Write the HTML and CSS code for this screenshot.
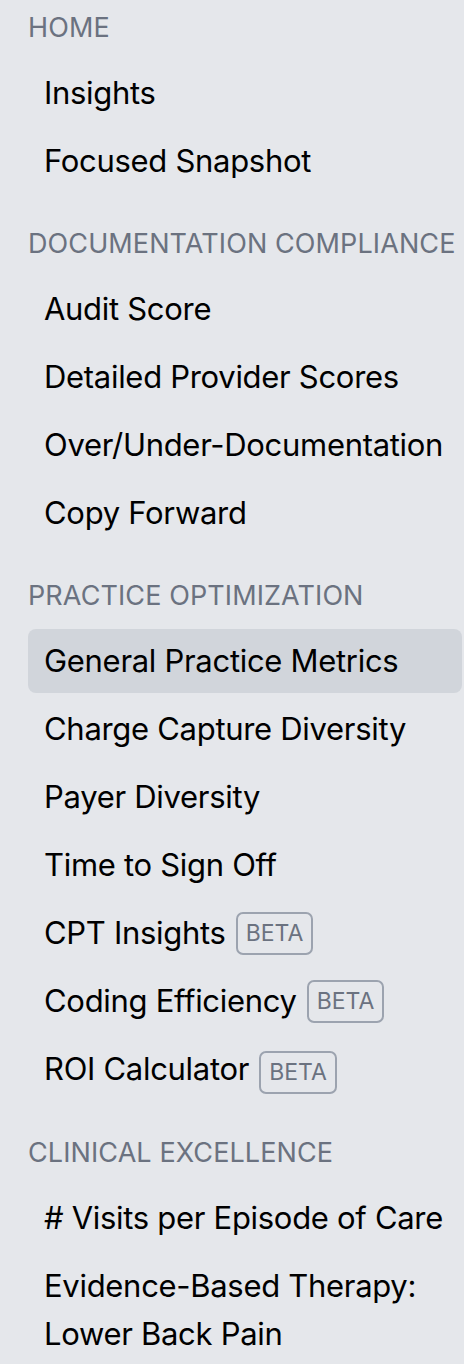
FILE: index.html
```html
<!DOCTYPE html>
<html lang="en">
<head>
<meta charset="utf-8">
<title>Sidebar</title>
<link rel="stylesheet" href="styles.css">
</head>
<body>
<nav class="sidebar">
  <section class="group">
    <h2 class="group-title">HOME</h2>
    <a class="item">Insights</a>
    <a class="item">Focused Snapshot</a>
  </section>
  <section class="group">
    <h2 class="group-title">DOCUMENTATION COMPLIANCE</h2>
    <a class="item">Audit Score</a>
    <a class="item">Detailed Provider Scores</a>
    <a class="item">Over/Under-Documentation</a>
    <a class="item">Copy Forward</a>
  </section>
  <section class="group">
    <h2 class="group-title">PRACTICE OPTIMIZATION</h2>
    <a class="item active">General Practice Metrics</a>
    <a class="item">Charge Capture Diversity</a>
    <a class="item">Payer Diversity</a>
    <a class="item">Time to Sign Off</a>
    <a class="item">CPT Insights<span class="badge">BETA</span></a>
    <a class="item">Coding Efficiency<span class="badge">BETA</span></a>
    <a class="item">ROI Calculator<span class="badge">BETA</span></a>
  </section>
  <section class="group">
    <h2 class="group-title">CLINICAL EXCELLENCE</h2>
    <a class="item"># Visits per Episode of Care</a>
    <a class="item">Evidence-Based Therapy:<br>Lower Back Pain</a>
  </section>
</nav>
</body>
</html>
```

FILE: styles.css
```css
html, body {
  margin: 0;
  padding: 0;
  background: #e5e7eb;
}
body {
  font-family: Inter, "Noto Sans", sans-serif;
  color: #000;
}
.sidebar {
  display: flex;
  flex-direction: column;
  gap: 31px;
  padding: 8px 2px 0 28px;
}
.group {
  display: flex;
  flex-direction: column;
  gap: 4px;
}
.group-title {
  margin: 0 0 9px 0;
  font-size: 27px;
  font-weight: 400;
  line-height: 40px;
  color: #6b7280;
  letter-spacing: 0.1px;
  white-space: nowrap;
}
.item {
  display: flex;
  align-items: center;
  padding: 8px 16px;
  font-size: 31px;
  line-height: 48px;
  border-radius: 8px;
  white-space: nowrap;
  letter-spacing: -0.3px;
}
.item:last-child {
  display: block;
}
.item.active {
  background: #d1d5db;
}
.badge {
  display: inline-flex;
  align-items: center;
  margin-left: 10px;
  height: 39px;
  padding: 0 8px;
  border: 2px solid #9ca3af;
  border-radius: 7px;
  font-size: 23px;
  line-height: 1;
  color: #6b7280;
  letter-spacing: 0;
}
```
